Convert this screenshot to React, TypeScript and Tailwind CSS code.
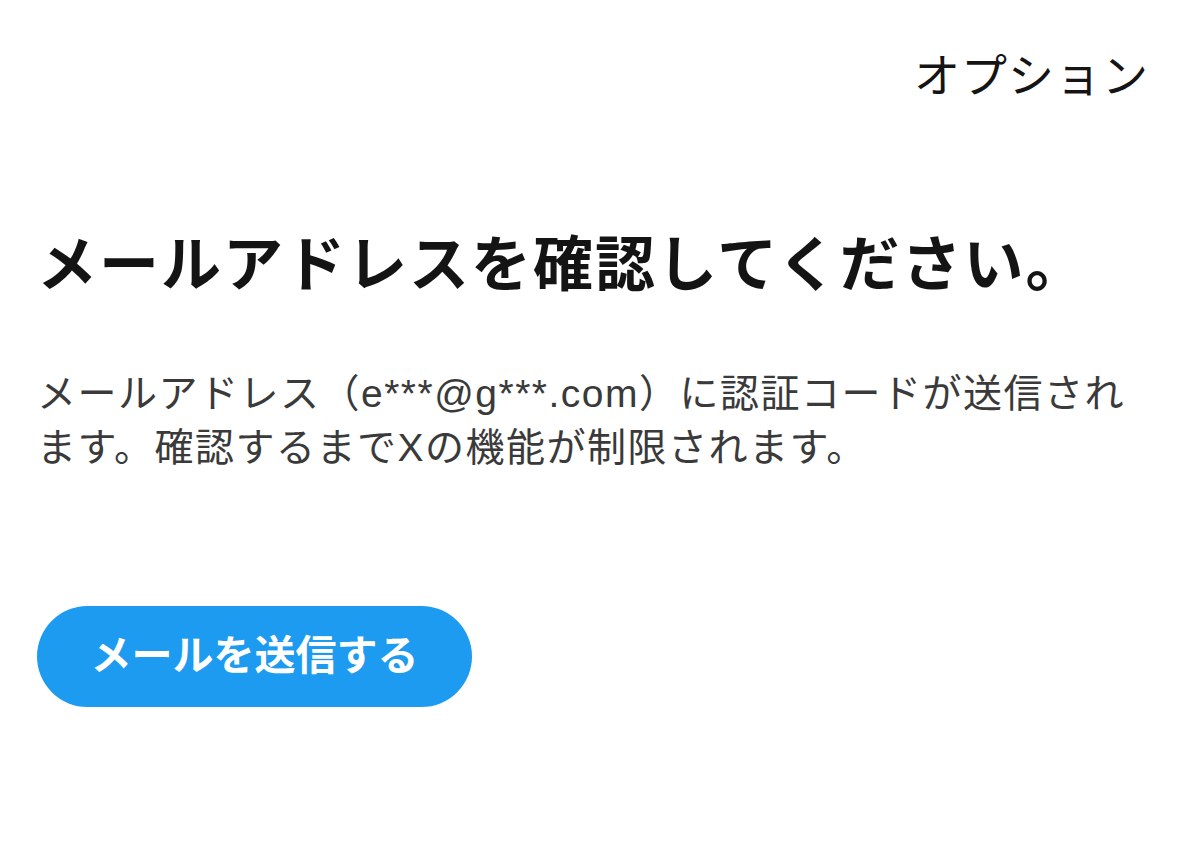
export default function App() {
  return (
    <div
      className="min-h-[864px] w-[1200px] bg-white"
      style={{ fontFamily: '"Liberation Sans", "Noto Sans CJK JP", sans-serif' }}
    >
      <div className="flex justify-end pr-[51px] pt-[49px]">
        <span className="text-[46px] leading-[54px] tracking-[1px] text-[#141414]">オプション</span>
      </div>

      <div className="pl-[37px] pr-[50px]">
        <h1 className="mt-[128px] text-[60px] font-bold leading-[70px] tracking-[2px] text-[#141414]">
          メールアドレスを確認してください。
        </h1>
        <p className="mt-[66px] text-[39px] leading-[54px] tracking-[1.5px] text-[#3a3a3a]">
          メールアドレス（e***@g***.com）に認証コードが送信されます。確認するまでXの機能が制限されます。
        </p>
        <button
          type="button"
          className="mt-[131px] flex h-[101px] w-[435px] items-center justify-center rounded-full bg-[#1d9bf0] text-[41px] font-bold text-white"
        >
          メールを送信する
        </button>
      </div>
    </div>
  )
}
